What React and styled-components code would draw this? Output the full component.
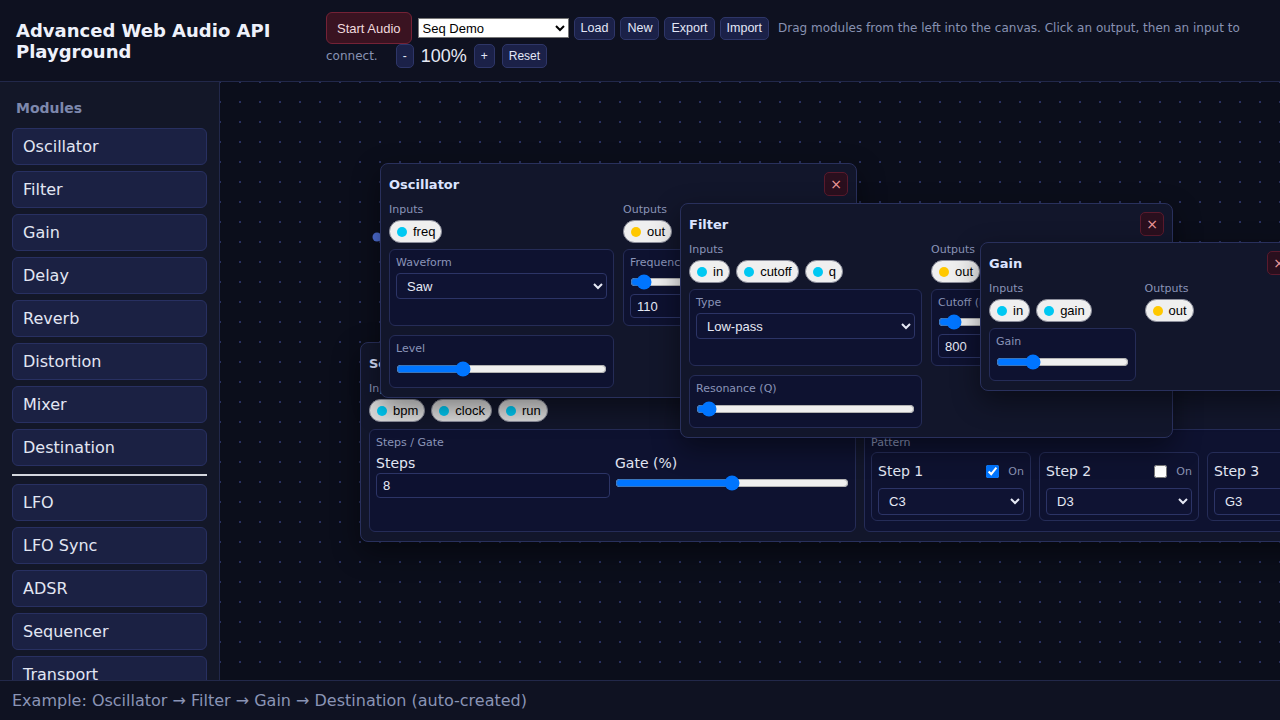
import React from 'react';
import styled, { createGlobalStyle } from 'styled-components';

const GlobalStyle = createGlobalStyle`
  html, body, #root { height: 100%; margin: 0; }
  body {
    background: #0b0e1b;
    font-family: "DejaVu Sans", "Noto Sans", sans-serif;
    color: #e2e6f3;
    overflow: hidden;
  }
  * { box-sizing: border-box; }
`;

const Shell = styled.div`
  display: flex;
  flex-direction: column;
  height: 100vh;
`;

const Header = styled.header`
  display: flex;
  align-items: center;
  gap: 16px;
  height: 82px;
  padding: 12px 16px;
  background: #0e1120;
  border-bottom: 1px solid #22284a;
  flex-shrink: 0;
`;

const Title = styled.h1`
  margin: 0;
  width: 294px;
  flex-shrink: 0;
  font-size: 18px;
  line-height: 21px;
  font-weight: bold;
  color: #eef1fb;
`;

const Controls = styled.div`
  flex: 1;
  align-self: flex-start;
  font-family: "DejaVu Sans", sans-serif;
  font-size: 12px;
  color: #8891b2;
`;

const StartButton = styled.button`
  display: inline-block;
  vertical-align: middle;
  height: 32px;
  padding: 0 10px;
  margin-right: 6px;
  background: #3a1321;
  border: 1px solid #742236;
  border-radius: 6px;
  color: #f0d9de;
  font: 13px "Liberation Sans", Arial, sans-serif;
`;

const PresetSelect = styled.select`
  display: inline-block;
  vertical-align: middle;
  width: 151px;
  height: 20px;
  margin-right: 5px;
  font: 13px "Liberation Sans", Arial, sans-serif;
  color: #000;
  background: #fff;
`;

const SmallButton = styled.button`
  display: inline-block;
  vertical-align: middle;
  height: ${(p) => (p.$tall ? 24 : 23)}px;
  padding: 0 6px;
  margin-right: ${(p) => (p.$flush ? 0 : 5)}px;
  background: #1b2148;
  border: 1px solid #2e3668;
  border-radius: 5px;
  color: #e3e7f7;
  font: ${(p) => (p.$tall ? 12 : 12.5)}px "Liberation Sans", Arial, sans-serif;
`;

const Hint = styled.span`
  margin-left: 9px;
  vertical-align: middle;
`;

const ZoomGroup = styled.span`
  display: inline-flex;
  align-items: center;
  gap: 7px;
  margin-left: 18px;
  vertical-align: middle;
`;

const ZoomValue = styled.span`
  font: 18px "Liberation Sans", Arial, sans-serif;
  color: #e6e9f5;
`;

const Main = styled.div`
  flex: 1;
  display: flex;
  min-height: 0;
`;

const Sidebar = styled.aside`
  width: 220px;
  flex-shrink: 0;
  background: #131728;
  border-right: 1px solid #22284a;
  padding: 16px 12px;
  overflow: hidden;
  display: flex;
  flex-direction: column;
  gap: 6px;
`;

const SidebarHeading = styled.div`
  font-size: 14px;
  font-weight: bold;
  line-height: 20px;
  color: #7d88ad;
  margin: 0 4px 4px;
`;

const ModuleButton = styled.div`
  flex-shrink: 0;
  height: 37px;
  display: flex;
  align-items: center;
  padding: 0 10px;
  background: #1b2143;
  border: 1px solid #283061;
  border-radius: 6px;
  font-size: 16px;
  color: #e2e6f3;
`;

const Divider = styled.div`
  flex-shrink: 0;
  height: 2px;
  margin: 2px 0;
  background: #d4d7de;
`;

const Canvas = styled.div`
  flex: 1;
  position: relative;
  overflow: hidden;
  background-color: #0b0e1b;
  background-image: radial-gradient(circle, #2a3160 1px, transparent 1.3px);
  background-size: 20px 20px;
  background-position: 10px 10px;
`;

const CableLayer = styled.svg`
  position: absolute;
  inset: 0;
  width: 100%;
  height: 100%;
  pointer-events: none;
`;

const Node = styled.div`
  position: absolute;
  left: ${(p) => p.$x}px;
  top: ${(p) => p.$y}px;
  width: ${(p) => p.$w}px;
  z-index: ${(p) => p.$z};
  padding: 8px 8px 9px;
  background: #12162b;
  border: 1px solid #29305c;
  border-radius: 8px;
  box-shadow: 0 10px 28px rgba(0, 0, 0, 0.45);
`;

const NodeHeader = styled.div`
  display: flex;
  align-items: center;
  justify-content: space-between;
  height: 24px;
`;

const NodeTitle = styled.div`
  font-size: 13px;
  font-weight: bold;
  color: #dce4ff;
`;

const CloseButton = styled.button`
  width: 24px;
  height: 24px;
  padding: 0;
  display: flex;
  align-items: center;
  justify-content: center;
  background: #2a0f1e;
  border: 1px solid #5a1a2d;
  border-radius: 5px;
  color: #f29a9a;
  font: 14px "DejaVu Sans", sans-serif;
`;

const Columns = styled.div`
  display: grid;
  grid-template-columns: minmax(0, 1fr) minmax(0, 1fr);
  column-gap: ${(p) => p.$gap}px;
  row-gap: 9px;
  margin-top: ${(p) => p.$mt}px;
`;

const SmallLabel = styled.div`
  font-size: 11px;
  line-height: 13px;
  color: #8a94b8;
  margin-bottom: ${(p) => p.$mb ?? 4}px;
`;

const Pills = styled.div`
  display: flex;
  gap: 6px;
  flex-wrap: nowrap;
`;

const Pill = styled.button`
  display: inline-flex;
  align-items: center;
  gap: 6px;
  height: 23px;
  padding: 0 6px 0 7px;
  background: ${(p) => (p.$dim ? '#dcdcdc' : '#efefef')};
  border: 1px solid #8d8f9c;
  border-radius: 999px;
  color: #000;
  font: 13px "Liberation Sans", Arial, sans-serif;
  white-space: nowrap;
`;

const Dot = styled.span`
  width: 10px;
  height: 10px;
  border-radius: 50%;
  background: ${(p) => (p.$out ? '#ffc800' : '#00c8f2')};
`;

const Section = styled.div`
  min-width: 0;
  background: #0e1230;
  border: 1px solid #252c57;
  border-radius: 6px;
  padding: 6px 6px ${(p) => p.$pb ?? 6}px;
  overflow: hidden;
`;

const DarkSelect = styled.select`
  display: block;
  width: 100%;
  height: ${(p) => p.$h ?? 26}px;
  padding: 0 6px;
  background: #0f1333;
  border: 1px solid #2c3466;
  border-radius: 4px;
  color: #e6e9f5;
  font: 13px "Liberation Sans", Arial, sans-serif;
`;

const Range = styled.input.attrs({ type: 'range' })`
  display: block;
  width: 100%;
  margin: ${(p) => p.$mt ?? 6}px 0 4px;
`;

const NumberInput = styled.input.attrs({ type: 'number' })`
  display: block;
  width: 100%;
  height: ${(p) => p.$h ?? 24}px;
  margin-top: ${(p) => p.$mt ?? 3}px;
  padding: 0 6px;
  background: #0d1130;
  border: 1px solid #2c3466;
  border-radius: 4px;
  color: #e6e9f5;
  font: 13px "Liberation Sans", Arial, sans-serif;
`;

const FieldLabel = styled.div`
  font-size: 14px;
  line-height: 17px;
  color: #e2e6f3;
`;

const InnerGrid = styled.div`
  display: grid;
  grid-template-columns: 1fr 1fr;
  gap: 5px;
  margin-top: 6px;
`;

const StepRow = styled.div`
  display: flex;
  gap: 8px;
  margin-top: 3px;
`;

const StepCard = styled.div`
  flex: 0 0 160px;
  border: 1px solid #252c57;
  border-radius: 6px;
  padding: 10px 6px 5px;
`;

const StepHead = styled.div`
  display: flex;
  align-items: center;
  justify-content: space-between;
  margin-bottom: 8px;
`;

const StepToggle = styled.label`
  display: flex;
  align-items: center;
  gap: 6px;
  font-size: 11px;
  color: #8891b2;
  input { margin: 0 3px 0 0; width: 13px; height: 13px; }
`;

const Footer = styled.footer`
  flex-shrink: 0;
  height: 40px;
  display: flex;
  align-items: center;
  padding: 0 12px;
  background: #0f1222;
  border-top: 1px solid #22284a;
  font-size: 16px;
  color: #8a94b5;
`;

const modules = ['Oscillator', 'Filter', 'Gain', 'Delay', 'Reverb', 'Distortion', 'Mixer', 'Destination'];
const modulators = ['LFO', 'LFO Sync', 'ADSR', 'Sequencer', 'Transport'];
const notes = ['C3', 'D3', 'E3', 'F3', 'G3', 'A3', 'B3', 'C4'];
const steps = [
  { n: 'C3', on: true },
  { n: 'D3', on: false },
  { n: 'G3', on: true },
  { n: 'A3', on: false },
  { n: 'C3', on: true },
  { n: 'E3', on: false },
  { n: 'G3', on: true },
  { n: 'B3', on: false },
];

function Ports({ inputs, outputs, gap, mt = 7, dim = false }) {
  return (
    <Columns $gap={gap} $mt={mt}>
      <div>
        <SmallLabel>Inputs</SmallLabel>
        <Pills>
          {inputs.map((p) => (
            <Pill key={p} $dim={dim}><Dot />{p}</Pill>
          ))}
        </Pills>
      </div>
      <div>
        <SmallLabel>Outputs</SmallLabel>
        <Pills>
          {outputs.map((p) => (
            <Pill key={p} $dim={dim}><Dot $out />{p}</Pill>
          ))}
        </Pills>
      </div>
    </Columns>
  );
}

function NodeTop({ title }) {
  return (
    <NodeHeader>
      <NodeTitle>{title}</NodeTitle>
      <CloseButton>×</CloseButton>
    </NodeHeader>
  );
}

export default function App() {
  return (
    <Shell>
      <GlobalStyle />
      <Header>
        <Title>Advanced Web Audio API Playground</Title>
        <Controls>
          <StartButton>Start Audio</StartButton>
          <PresetSelect defaultValue="seq">
            <option value="basic">Basic Chain</option>
            <option value="seq">Seq Demo</option>
            <option value="lfo">LFO Wobble</option>
          </PresetSelect>
          <SmallButton>Load</SmallButton>
          <SmallButton>New</SmallButton>
          <SmallButton>Export</SmallButton>
          <SmallButton $flush>Import</SmallButton>
          <Hint>Drag modules from the left into the canvas. Click an output, then an input to connect.</Hint>
          <ZoomGroup>
            <SmallButton $tall $flush>-</SmallButton>
            <ZoomValue>100%</ZoomValue>
            <SmallButton $tall $flush>+</SmallButton>
            <SmallButton $tall $flush>Reset</SmallButton>
          </ZoomGroup>
        </Controls>
      </Header>

      <Main>
        <Sidebar>
          <SidebarHeading>Modules</SidebarHeading>
          {modules.map((m) => (
            <ModuleButton key={m}>{m}</ModuleButton>
          ))}
          <Divider />
          {modulators.map((m) => (
            <ModuleButton key={m}>{m}</ModuleButton>
          ))}
        </Sidebar>

        <Canvas>
          <CableLayer>
            <circle cx="157" cy="155" r="4.5" fill="#4f6fd6" />
          </CableLayer>

          <Node $x={140} $y={260} $w={1000} $z={1}>
            <NodeTop title="Sequencer" />
            <Ports inputs={['bpm', 'clock', 'run']} outputs={['gate', 'pitch']} gap={8} mt={7} dim />
            <Columns $gap={8} $mt={7}>
              <Section $pb={8}>
                <SmallLabel $mb={0}>Steps / Gate</SmallLabel>
                <InnerGrid>
                  <div>
                    <FieldLabel>Steps</FieldLabel>
                    <NumberInput defaultValue={8} $h={25} $mt={1} />
                  </div>
                  <div>
                    <FieldLabel>Gate (%)</FieldLabel>
                    <Range min={0} max={100} defaultValue={50} $mt={3} />
                  </div>
                </InnerGrid>
              </Section>
              <Section $pb={10}>
                <SmallLabel $mb={0}>Pattern</SmallLabel>
                <StepRow>
                  {steps.map((s, i) => (
                    <StepCard key={i}>
                      <StepHead>
                        <FieldLabel>Step {i + 1}</FieldLabel>
                        <StepToggle>
                          <input type="checkbox" defaultChecked={s.on} />
                          On
                        </StepToggle>
                      </StepHead>
                      <DarkSelect defaultValue={s.n} $h={27}>
                        {notes.map((n) => (
                          <option key={n}>{n}</option>
                        ))}
                      </DarkSelect>
                    </StepCard>
                  ))}
                </StepRow>
              </Section>
            </Columns>
          </Node>

          <Node $x={160} $y={81} $w={477} $z={2}>
            <NodeTop title="Oscillator" />
            <Ports inputs={['freq']} outputs={['out']} gap={9} />
            <Columns $gap={9} $mt={6}>
              <Section>
                <SmallLabel>Waveform</SmallLabel>
                <DarkSelect defaultValue="saw">
                  <option value="sine">Sine</option>
                  <option value="square">Square</option>
                  <option value="saw">Saw</option>
                  <option value="triangle">Triangle</option>
                </DarkSelect>
              </Section>
              <Section $pb={7}>
                <SmallLabel $mb={0}>Frequency (Hz)</SmallLabel>
                <Range min={20} max={2000} defaultValue={82} $mt={5} />
                <NumberInput defaultValue={110} />
              </Section>
              <Section>
                <SmallLabel $mb={0}>Level</SmallLabel>
                <Range min={0} max={1} step={0.01} defaultValue={0.3} />
              </Section>
            </Columns>
          </Node>

          <Node $x={460} $y={121} $w={493} $z={3}>
            <NodeTop title="Filter" />
            <Ports inputs={['in', 'cutoff', 'q']} outputs={['out']} gap={9} />
            <Columns $gap={9} $mt={6}>
              <Section>
                <SmallLabel>Type</SmallLabel>
                <DarkSelect defaultValue="lowpass">
                  <option value="lowpass">Low-pass</option>
                  <option value="highpass">High-pass</option>
                  <option value="bandpass">Band-pass</option>
                </DarkSelect>
              </Section>
              <Section $pb={7}>
                <SmallLabel $mb={0}>Cutoff (Hz)</SmallLabel>
                <Range min={20} max={20000} defaultValue={800} $mt={5} />
                <NumberInput defaultValue={800} />
              </Section>
              <Section>
                <SmallLabel $mb={0}>Resonance (Q)</SmallLabel>
                <Range min={0} max={30} step={0.1} defaultValue={0.7} />
              </Section>
            </Columns>
          </Node>

          <Node $x={760} $y={160} $w={320} $z={4}>
            <NodeTop title="Gain" />
            <Ports inputs={['in', 'gain']} outputs={['out']} gap={9} />
            <Columns $gap={9} $mt={6}>
              <Section>
                <SmallLabel $mb={0}>Gain</SmallLabel>
                <Range min={0} max={2} step={0.01} defaultValue={0.5} />
              </Section>
            </Columns>
          </Node>
        </Canvas>
      </Main>

      <Footer>Example: Oscillator → Filter → Gain → Destination (auto-created)</Footer>
    </Shell>
  );
}
